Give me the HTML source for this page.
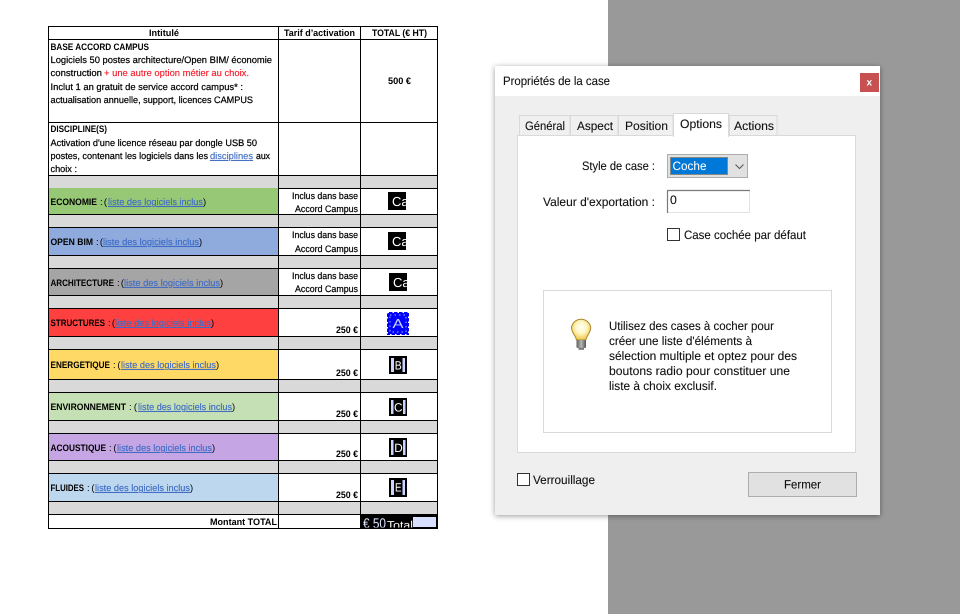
<!DOCTYPE html>
<html lang="fr"><head><meta charset="utf-8"><title>Propriétés de la case</title>
<style>
html,body{margin:0;padding:0;width:960px;height:614px;overflow:hidden;background:#fff}
svg{display:block}
text{font-family:"Liberation Sans",sans-serif;white-space:pre}
.t text{font-size:9.4px;fill:#000}
.t .m{stroke:#000;stroke-width:.22px}
.t .b{font-weight:bold}
.t .l{fill:#3f6cc4;text-decoration:underline;stroke:#3f6cc4;stroke-width:.15px}
.d text{font-size:12.2px;fill:#111;stroke:#111;stroke-width:.1px}
.w{fill:#fff;font-size:12px}
</style></head><body>
<svg width="960" height="614" viewBox="0 0 960 614" xmlns="http://www.w3.org/2000/svg" text-rendering="geometricPrecision">
<defs>
<filter id="sh" x="-5%" y="-5%" width="110%" height="110%"><feDropShadow dx="0" dy="1" stdDeviation="3" flood-color="#000" flood-opacity=".4"/></filter>
<filter id="soft" x="0" y="0" width="100%" height="100%"><feGaussianBlur stdDeviation=".22"/></filter>
<radialGradient id="bulb" cx=".5" cy=".4" r=".58"><stop offset="0" stop-color="#ffffff"/><stop offset=".5" stop-color="#fff6c0"/><stop offset="1" stop-color="#f0c84e"/></radialGradient>
<linearGradient id="base" x1="0" x2="1" y1="0" y2="0"><stop offset="0" stop-color="#5f5f5f"/><stop offset=".5" stop-color="#b5b5b5"/><stop offset="1" stop-color="#555"/></linearGradient>
</defs>
<rect x="608" y="0" width="352" height="614" fill="#999"/>

<!-- table fills -->
<g fill="#d9d9d9">
<rect x="48" y="175" width="390" height="14"/><rect x="48" y="214" width="390" height="13"/><rect x="48" y="255" width="390" height="13"/><rect x="48" y="295" width="390" height="13"/><rect x="48" y="336" width="390" height="13"/><rect x="48" y="379" width="390" height="13"/><rect x="48" y="420" width="390" height="13"/><rect x="48" y="460" width="390" height="13"/><rect x="48" y="501" width="390" height="13"/>
</g>
<rect x="49" y="188" width="229" height="26" fill="#97c875"/>
<rect x="49" y="227" width="229" height="28" fill="#8faadc"/>
<rect x="49" y="268" width="229" height="27" fill="#a5a5a5"/>
<rect x="49" y="308" width="229" height="28" fill="#ff4040"/>
<rect x="49" y="349" width="229" height="30" fill="#ffd966"/>
<rect x="49" y="392" width="229" height="28" fill="#c5e0b4"/>
<rect x="49" y="433" width="229" height="27" fill="#c5a5e3"/>
<rect x="49" y="473" width="229" height="28" fill="#bdd7ee"/>
<!-- lines -->
<g fill="#000">
<rect x="48" y="26" width="390" height="1"/><rect x="48" y="39" width="390" height="1"/><rect x="48" y="122" width="390" height="1"/><rect x="48" y="175" width="390" height="1"/>
<rect x="278" y="188" width="160" height="1"/><rect x="48" y="214" width="390" height="1"/><rect x="48" y="227" width="390" height="1"/><rect x="48" y="255" width="390" height="1"/><rect x="48" y="268" width="390" height="1"/><rect x="48" y="295" width="390" height="1"/><rect x="48" y="308" width="390" height="1"/><rect x="48" y="336" width="390" height="1"/><rect x="48" y="349" width="390" height="1"/><rect x="48" y="379" width="390" height="1"/><rect x="48" y="392" width="390" height="1"/><rect x="48" y="420" width="390" height="1"/><rect x="48" y="433" width="390" height="1"/><rect x="48" y="460" width="390" height="1"/><rect x="48" y="473" width="390" height="1"/><rect x="48" y="501" width="390" height="1"/><rect x="48" y="514" width="390" height="1"/><rect x="48" y="528" width="390" height="1"/>
<rect x="48" y="26" width="1" height="503"/><rect x="278" y="26" width="1" height="503"/><rect x="360" y="26" width="1" height="503"/><rect x="437" y="26" width="1" height="503"/>
</g>

<!-- table text -->
<g class="t" filter="url(#soft)">
<text class="b" x="149" y="36" textLength="30" lengthAdjust="spacingAndGlyphs">Intitulé</text>
<text class="b" x="284" y="36" textLength="71" lengthAdjust="spacingAndGlyphs">Tarif d’activation</text>
<text class="b" x="372" y="36" textLength="55" lengthAdjust="spacingAndGlyphs">TOTAL (€ HT)</text>
<text class="b" x="50.5" y="50" textLength="98.5" lengthAdjust="spacingAndGlyphs">BASE ACCORD CAMPUS</text>
<text class="m" x="50.5" y="63" textLength="221.5" lengthAdjust="spacingAndGlyphs">Logiciels 50 postes architecture/Open BIM/ économie</text>
<text class="m" x="50.5" y="76" textLength="51.5" lengthAdjust="spacingAndGlyphs">construction</text>
<text x="104" y="76" textLength="145" lengthAdjust="spacingAndGlyphs" style="fill:#f4202e;stroke:#f4202e;stroke-width:.15px">+ une autre option métier au choix.</text>
<text class="m" x="50.5" y="90" textLength="192.5" lengthAdjust="spacingAndGlyphs">Inclut 1 an gratuit de service accord campus* :</text>
<text class="m" x="50.5" y="103" textLength="202.5" lengthAdjust="spacingAndGlyphs">actualisation annuelle, support, licences CAMPUS</text>
<text class="b" x="388" y="84" textLength="23" lengthAdjust="spacingAndGlyphs">500 €</text>
<text class="b" x="50.5" y="132" textLength="56.5" lengthAdjust="spacingAndGlyphs">DISCIPLINE(S)</text>
<text class="m" x="50.5" y="146" textLength="206.5" lengthAdjust="spacingAndGlyphs">Activation d'une licence réseau par dongle USB 50</text>
<text class="m" x="50.5" y="159" textLength="157.5" lengthAdjust="spacingAndGlyphs">postes, contenant les logiciels dans les</text>
<text class="l" x="210" y="159" textLength="43" lengthAdjust="spacingAndGlyphs">disciplines</text>
<text class="m" x="256" y="159" textLength="14" lengthAdjust="spacingAndGlyphs">aux</text>
<text class="m" x="50.5" y="172" textLength="26.5" lengthAdjust="spacingAndGlyphs">choix :</text>

<text class="b" x="50.5" y="205" textLength="46.5" lengthAdjust="spacingAndGlyphs">ECONOMIE</text><text x="100" y="205" textLength="7" lengthAdjust="spacing">: (</text><text class="l" x="108" y="205" textLength="95" lengthAdjust="spacingAndGlyphs">liste des logiciels inclus</text><text x="203" y="205">)</text>
<text class="b" x="50.5" y="245" textLength="42.5" lengthAdjust="spacingAndGlyphs">OPEN BIM</text><text x="96" y="245" textLength="7" lengthAdjust="spacing">: (</text><text class="l" x="103" y="245" textLength="96" lengthAdjust="spacingAndGlyphs">liste des logiciels inclus</text><text x="199" y="245">)</text>
<text class="b" x="50.5" y="286" textLength="63.5" lengthAdjust="spacingAndGlyphs">ARCHITECTURE</text><text x="117" y="286" textLength="7" lengthAdjust="spacing">: (</text><text class="l" x="124" y="286" textLength="96" lengthAdjust="spacingAndGlyphs">liste des logiciels inclus</text><text x="220" y="286">)</text>
<text class="b" x="50.5" y="326" textLength="54.5" lengthAdjust="spacingAndGlyphs">STRUCTURES</text><text x="108" y="326" textLength="7" lengthAdjust="spacing">: (</text><text class="l" x="115" y="326" textLength="96" lengthAdjust="spacingAndGlyphs">liste des logiciels inclus</text><text x="211" y="326">)</text>
<text class="b" x="50.5" y="368" textLength="59.5" lengthAdjust="spacingAndGlyphs">ENERGETIQUE</text><text x="113" y="368" textLength="7.5" lengthAdjust="spacing">: (</text><text class="l" x="121" y="368" textLength="95" lengthAdjust="spacingAndGlyphs">liste des logiciels inclus</text><text x="216" y="368">)</text>
<text class="b" x="50.5" y="410" textLength="75.5" lengthAdjust="spacingAndGlyphs">ENVIRONNEMENT</text><text x="129" y="410" textLength="8" lengthAdjust="spacing">: (</text><text class="l" x="138" y="410" textLength="94" lengthAdjust="spacingAndGlyphs">liste des logiciels inclus</text><text x="232" y="410">)</text>
<text class="b" x="50.5" y="451" textLength="55.5" lengthAdjust="spacingAndGlyphs">ACOUSTIQUE</text><text x="109" y="451" textLength="7.5" lengthAdjust="spacing">: (</text><text class="l" x="117" y="451" textLength="95" lengthAdjust="spacingAndGlyphs">liste des logiciels inclus</text><text x="212" y="451">)</text>
<text class="b" x="50.5" y="491" textLength="33.5" lengthAdjust="spacingAndGlyphs">FLUIDES</text><text x="87" y="491" textLength="7.5" lengthAdjust="spacing">: (</text><text class="l" x="95" y="491" textLength="95" lengthAdjust="spacingAndGlyphs">liste des logiciels inclus</text><text x="190" y="491">)</text>
<text class="b" x="210" y="525" textLength="67" lengthAdjust="spacingAndGlyphs">Montant TOTAL</text>

<text class="m" x="292" y="199" textLength="66" lengthAdjust="spacingAndGlyphs">Inclus dans base</text><text class="m" x="295" y="212" textLength="63" lengthAdjust="spacingAndGlyphs">Accord Campus</text>
<text class="m" x="292" y="238" textLength="66" lengthAdjust="spacingAndGlyphs">Inclus dans base</text><text class="m" x="295" y="252" textLength="63" lengthAdjust="spacingAndGlyphs">Accord Campus</text>
<text class="m" x="292" y="279" textLength="66" lengthAdjust="spacingAndGlyphs">Inclus dans base</text><text class="m" x="295" y="292" textLength="63" lengthAdjust="spacingAndGlyphs">Accord Campus</text>
<text class="b" x="336" y="333" textLength="22" lengthAdjust="spacingAndGlyphs">250 €</text>
<text class="b" x="336" y="376" textLength="22" lengthAdjust="spacingAndGlyphs">250 €</text>
<text class="b" x="336" y="417" textLength="22" lengthAdjust="spacingAndGlyphs">250 €</text>
<text class="b" x="336" y="457" textLength="22" lengthAdjust="spacingAndGlyphs">250 €</text>
<text class="b" x="336" y="498" textLength="22" lengthAdjust="spacingAndGlyphs">250 €</text>
</g>

<!-- form fields -->
<svg x="388" y="192" width="18" height="18"><rect width="18" height="18" fill="#000"/><text class="w" x="4" y="14" style="font-size:13px">Ca</text></svg>
<svg x="388" y="232" width="18" height="18"><rect width="18" height="18" fill="#000"/><text class="w" x="4" y="14" style="font-size:13px">Ca</text></svg>
<svg x="389" y="273" width="18" height="18"><rect width="18" height="18" fill="#000"/><text class="w" x="4" y="14" style="font-size:13px">Ca</text></svg>

<rect x="387" y="312" width="22" height="23" fill="#0000ff"/>
<rect x="387.5" y="312.5" width="21" height="22" fill="none" stroke="#fff" stroke-width="1" stroke-dasharray="1.5 3.5"/>
<rect x="390" y="315" width="16" height="17" fill="none" stroke="#aab4ff" stroke-width="1" stroke-dasharray="1.5 3"/>
<text x="392.5" y="328" textLength="11" lengthAdjust="spacingAndGlyphs" style="font-size:13px;fill:#ccd5ff">A</text>

<g fill="#000"><rect x="389" y="356" width="18" height="18"/><rect x="389" y="398" width="18" height="18"/><rect x="389" y="438" width="18" height="19"/><rect x="389" y="478" width="18" height="19"/></g>
<g fill="#ccd5ff">
<rect x="391" y="358" width="3" height="14"/><rect x="402.5" y="358" width="2.5" height="14"/>
<rect x="391" y="400" width="2.5" height="14"/><rect x="403" y="400" width="2.5" height="14"/>
<rect x="391" y="440" width="2.5" height="15"/><rect x="403" y="440" width="2.5" height="15"/>
<rect x="391" y="480" width="3" height="15"/><rect x="402.5" y="480" width="2.5" height="15"/>
</g>
<text class="w" x="394.8" y="369.5" textLength="7" lengthAdjust="spacingAndGlyphs">B</text>
<text class="w" x="394" y="411.5" textLength="8.5" lengthAdjust="spacingAndGlyphs">C</text>
<text class="w" x="394.3" y="452" textLength="8.5" lengthAdjust="spacingAndGlyphs">D</text>
<text class="w" x="395" y="491.5" textLength="6.5" lengthAdjust="spacingAndGlyphs">E</text>

<rect x="361" y="515" width="76" height="13" fill="#000"/>
<svg x="362" y="517" width="75" height="10.5">
<text x="1" y="11" textLength="23" lengthAdjust="spacingAndGlyphs" style="font-size:14px;fill:#dfe4ff">€ 50</text>
<text x="25" y="12" textLength="26" lengthAdjust="spacingAndGlyphs" style="font-size:11.5px;fill:#fff">Total</text>
<rect x="51" y="0" width="23" height="10" fill="#d9dfff"/>
</svg>

<!-- dialog -->
<rect x="495" y="66" width="385" height="449" fill="#efefef" filter="url(#sh)"/>
<rect x="495" y="66" width="385" height="30" fill="#fff"/>
<rect x="860" y="73" width="19" height="19" fill="#c75050"/>
<text x="866.5" y="85.5" style="font-size:10px;font-weight:bold;fill:#fff">x</text>
<g class="d">
<text x="503" y="85" textLength="107" lengthAdjust="spacingAndGlyphs">Propriétés de la case</text>

<rect x="519.5" y="115.5" width="50.5" height="21" fill="#f0f0f0" stroke="#d9d9d9"/>
<rect x="570.5" y="115.5" width="47.5" height="21" fill="#f0f0f0" stroke="#d9d9d9"/>
<rect x="618.5" y="115.5" width="54.5" height="21" fill="#f0f0f0" stroke="#d9d9d9"/>
<rect x="729.5" y="115.5" width="47.5" height="21" fill="#f0f0f0" stroke="#d9d9d9"/>
<rect x="517.5" y="135.5" width="338" height="317" fill="#fff" stroke="#d9d9d9"/>
<rect x="673.5" y="113.5" width="55" height="23" fill="#fff" stroke="#d9d9d9"/>
<rect x="674" y="134" width="54" height="3" fill="#fff"/>
<text x="525" y="130" textLength="40" lengthAdjust="spacingAndGlyphs">Général</text>
<text x="577" y="130" textLength="36" lengthAdjust="spacingAndGlyphs">Aspect</text>
<text x="625" y="130" textLength="43" lengthAdjust="spacingAndGlyphs">Position</text>
<text x="680" y="128" textLength="42" lengthAdjust="spacingAndGlyphs">Options</text>
<text x="734" y="130" textLength="40" lengthAdjust="spacingAndGlyphs">Actions</text>

<text x="582" y="170" textLength="73" lengthAdjust="spacingAndGlyphs">Style de case :</text>
<rect x="667.5" y="154.5" width="80" height="23" fill="#e1e1e1" stroke="#adadad"/>
<rect x="670" y="157" width="58" height="18" fill="#0078d7"/>
<rect x="670.5" y="157.5" width="57" height="17" fill="none" stroke="#ff9a2e" stroke-width="1" stroke-dasharray="1 1"/>
<text x="672.5" y="170" textLength="34" lengthAdjust="spacingAndGlyphs" style="fill:#fff;stroke:#fff;stroke-width:.05px">Coche</text>
<path d="M735.5 164.5 L739.5 168.5 L743.5 164.5" fill="none" stroke="#555" stroke-width="1"/>

<text x="543" y="206" textLength="112" lengthAdjust="spacingAndGlyphs">Valeur d'exportation :</text>
<rect x="667" y="190" width="83" height="23" fill="#fff"/>
<path d="M749.5 190.5 V212.5 H667.5" fill="none" stroke="#e3e3e3"/>
<path d="M667.5 213 V190.5 H750" fill="none" stroke="#7a7a7a" stroke-width="1.2"/>
<text x="670" y="204">0</text>

<rect x="667.5" y="228.5" width="12" height="12" fill="#fff" stroke="#333"/>
<text x="684" y="239" textLength="122" lengthAdjust="spacingAndGlyphs">Case cochée par défaut</text>

<rect x="543.5" y="290.5" width="288" height="142" fill="#fff" stroke="#d9d9d9"/>
<path d="M576.5 340 C575.5 335 571.5 333 571.5 327.5 A9.7 9.7 0 0 1 590.7 327.5 C590.7 333 586.8 335 585.8 340 Z" fill="url(#bulb)" stroke="#a8862c" stroke-width="1"/>
<rect x="576.5" y="340" width="9.5" height="8" rx="1" fill="url(#base)"/>
<rect x="578.5" y="348" width="5.5" height="1.8" fill="#777"/>
<text x="609" y="330" textLength="165" lengthAdjust="spacingAndGlyphs">Utilisez des cases à cocher pour</text>
<text x="609" y="345" textLength="143" lengthAdjust="spacingAndGlyphs">créer une liste d'éléments à</text>
<text x="609" y="360" textLength="188" lengthAdjust="spacingAndGlyphs">sélection multiple et optez pour des</text>
<text x="609" y="375" textLength="181" lengthAdjust="spacingAndGlyphs">boutons radio pour constituer une</text>
<text x="609" y="390" textLength="108" lengthAdjust="spacingAndGlyphs">liste à choix exclusif.</text>

<rect x="517.5" y="473.5" width="12" height="12" fill="#fff" stroke="#333"/>
<text x="533" y="484" textLength="62" lengthAdjust="spacingAndGlyphs">Verrouillage</text>

<rect x="748.5" y="472.5" width="108" height="24" fill="#e1e1e1" stroke="#adadad"/>
<text x="784" y="488.5" textLength="37" lengthAdjust="spacingAndGlyphs">Fermer</text>
</g>
</svg>
</body></html>
